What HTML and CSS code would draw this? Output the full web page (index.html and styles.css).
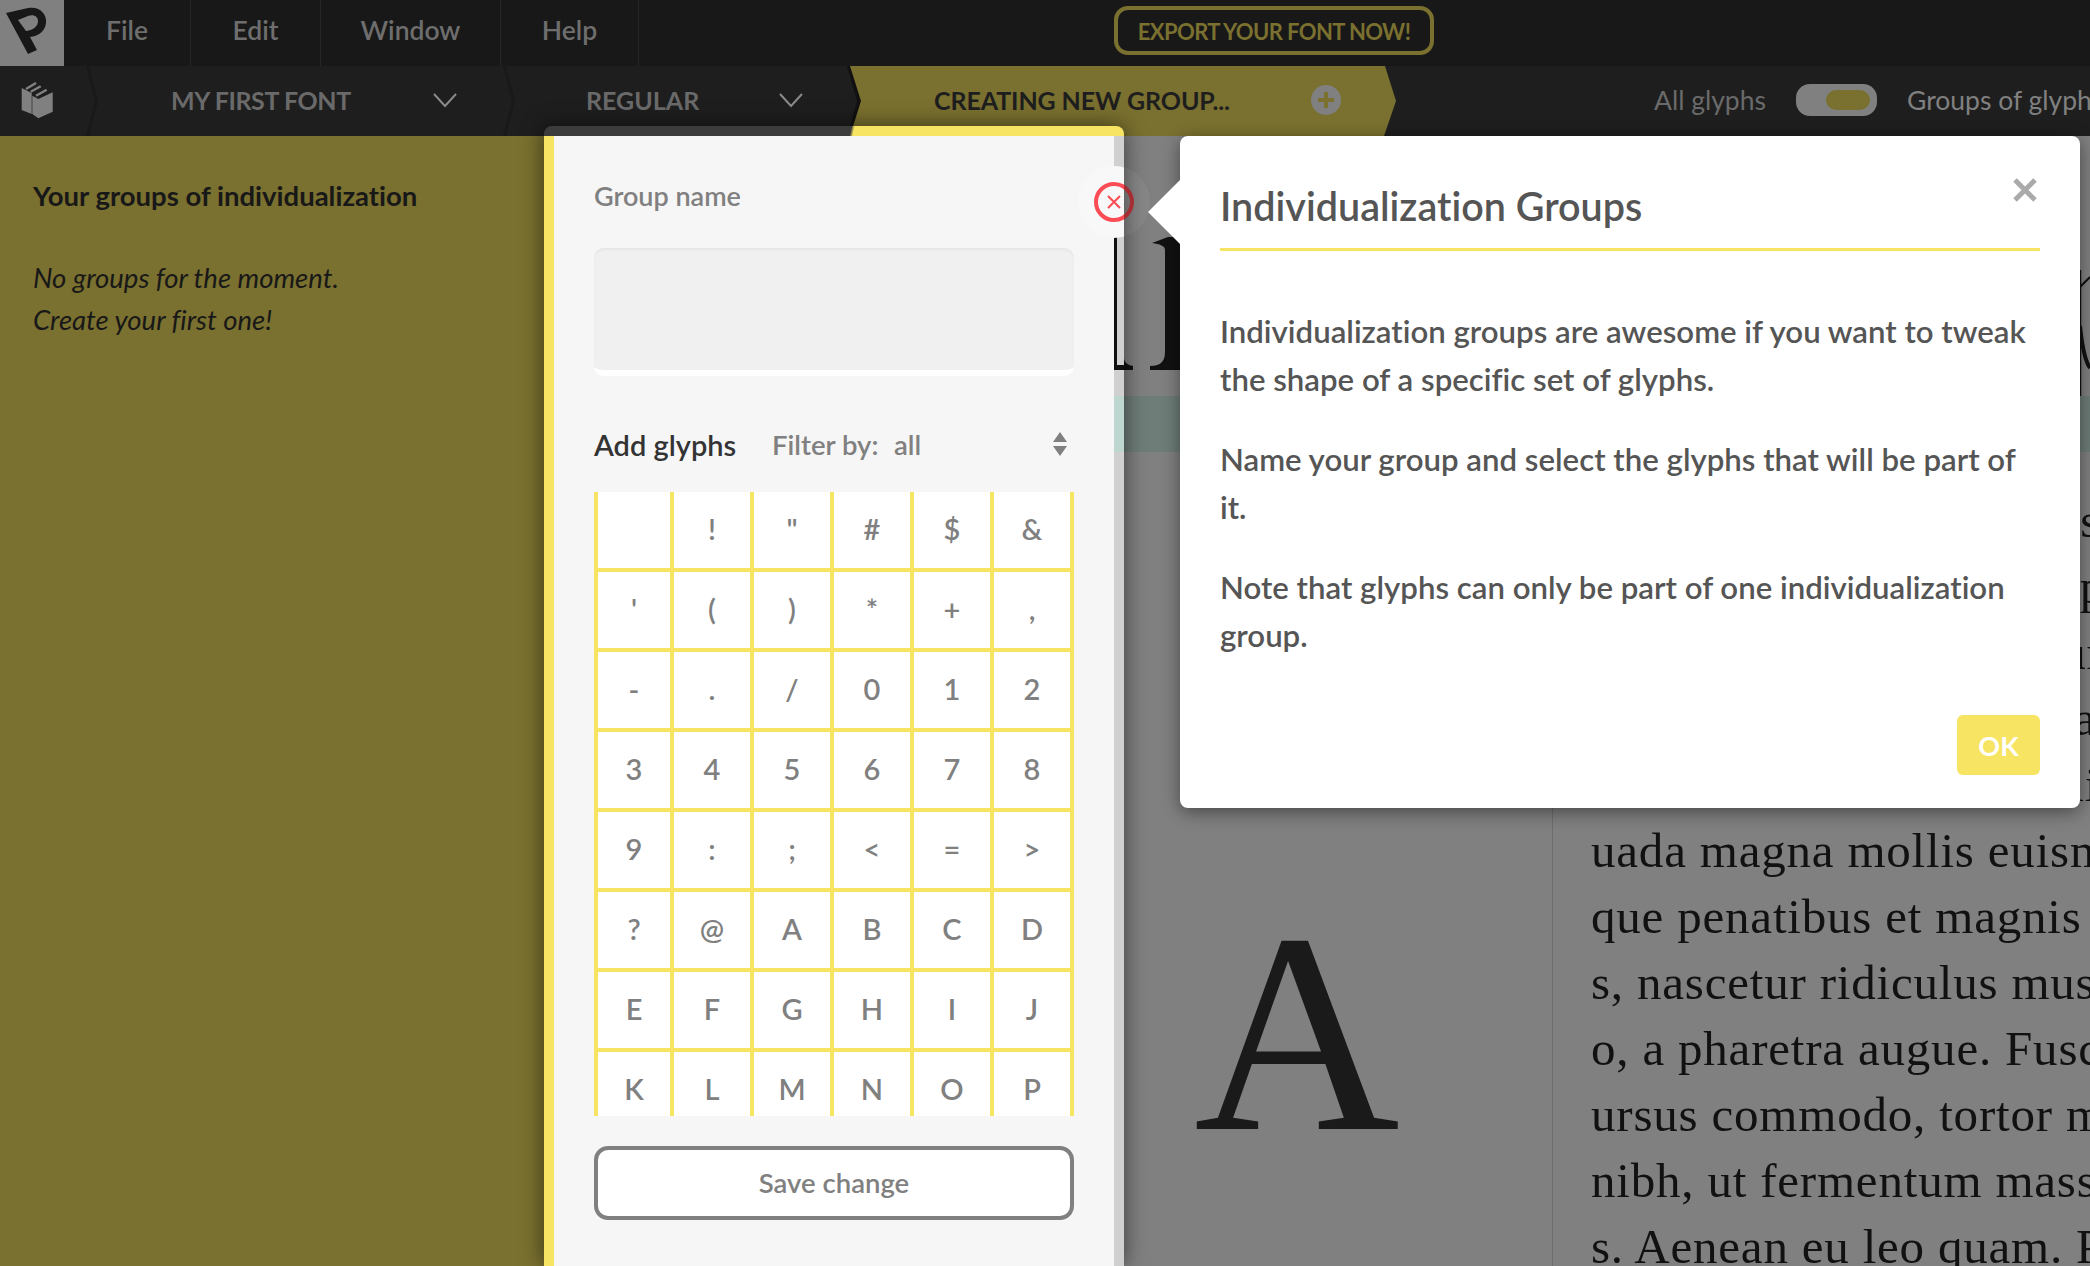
FILE: index.html
```html
<!DOCTYPE html>
<html lang="en">

<head>
  <meta charset="UTF-8">
  <title>Individualization Groups</title>
  <link rel="stylesheet" href="styles.css">
</head>

<body>
  <!-- Menu -->
  <div class="topbar">
    <div class="logo">
      <svg width="64" height="66" viewBox="0 0 64 66">
        <path d="M6 13 L28 8 C40 6 47 14 46 23 C45 32 38 36 30 37 L37 50 L28 54 Z M18 20 L26 31 C34 30 38 26 38 21 C38 16 33 14 28 16 Z" fill="#181818" fill-rule="evenodd"/>
      </svg>
    </div>
    <div class="menu-item file">File</div>
    <div class="menu-item edit">Edit</div>
    <div class="menu-item window">Window</div>
    <div class="menu-item help">Help</div>
    <button class="export">EXPORT YOUR FONT NOW!</button>
  </div>

  <!-- Navigation des polices -->
  <div class="navbar">
    <div class="books">
      <svg width="34" height="38" viewBox="0 0 34 38">
        <path d="M1.7 6 L11.7 11 V32 L1.7 28 Z" fill="#808080"/>
        <path d="M12.3 13.7 L18.3 17 L32.7 10.3 V29.7 L18.3 36.3 L12.3 32 Z" fill="#808080"/>
        <path d="M6 7 L16 1 M10.7 9.7 L20.7 4.3 M16 13.7 L26.7 7.7" stroke="#808080" stroke-width="2.4" fill="none"/>
      </svg>
    </div>
    <div class="tab tab-font">
      <span class="tab-label">MY FIRST FONT</span>
      <svg class="chevron" width="26" height="16" viewBox="0 0 26 16"><path d="M2 2 L13 14 L24 2" fill="none" stroke="#8a8a8a" stroke-width="2"/></svg>
    </div>
    <div class="tab tab-style">
      <span class="tab-label">REGULAR</span>
      <svg class="chevron" width="26" height="16" viewBox="0 0 26 16"><path d="M2 2 L13 14 L24 2" fill="none" stroke="#8a8a8a" stroke-width="2"/></svg>
    </div>
    <div class="tab tab-active">
      <span class="tab-label">CREATING NEW GROUP...</span>
      <svg class="plus" width="30" height="30" viewBox="0 0 30 30">
        <circle cx="15" cy="15" r="15" fill="#808080"/>
        <path d="M15 7 V23 M7 15 H23" stroke="#7a702f" stroke-width="4"/>
      </svg>
    </div>
    <div class="view-switch">
      <span class="all-glyphs">All glyphs</span>
      <div class="toggle"><div class="knob"></div></div>
      <span class="groups-glyphs">Groups of glyphs</span>
    </div>
  </div>

  <div class="main">
    <!-- Liste des groupes -->
    <div class="groups">
      <h2>Your groups of individualization</h2>
      <p>No groups for the moment.</p>
      <p>Create your first one!</p>
    </div>

    <!-- Panneau de creation -->
    <div class="glyph-panel">
      <div class="panel-top"></div>
      <div class="panel-body">
        <div class="panel-content">
          <div class="field-label">Group name</div>
          <div class="name-input"></div>
          <div class="add-row">
            <span class="add-title">Add glyphs</span>
            <span class="filter-label">Filter by:</span>
            <span class="filter-value">all</span>
            <svg class="updown" width="14" height="24" viewBox="0 0 14 24">
              <path d="M7 0 L14 10 H0 Z M7 24 L14 14 H0 Z" fill="#808080"/>
            </svg>
          </div>
          <div class="glyph-grid" id="glyph-grid"></div>
          <button class="save">Save change</button>
        </div>
        <div class="panel-edge"></div>
      </div>
    </div>

    <!-- Apercu derriere le voile -->
    <div class="preview">
      <div class="preview-head">
        <svg width="56" height="260" viewBox="0 0 56 260">
          <path d="M28 107 L44 101 H56 V234 H26 V230 C36 230 41 226 41 216 V114 C41 110 36 108 28 107 Z" fill="#111"/>
          <path d="M0 234 H9 V230 C3 229 0 226 0 222 Z" fill="#111"/>
        </svg>
        <svg width="10" height="260" viewBox="0 0 10 260">
          <path d="M0.5 134 V260" stroke="#111" stroke-width="1.5"/>
          <path d="M0 151 L10 141" stroke="#111" stroke-width="2"/>
          <path d="M0 190 C2 210 5 225 10 232" fill="none" stroke="#111" stroke-width="4"/>
        </svg>
      </div>
      <div class="preview-band"></div>
      <div class="preview-cols">
        <div class="big-letter">A</div>
        <div class="sample">
          <div>Curabitur blandit tempus porttitor. Integer posu</div>
          <div>Cras mattis consectetur purus sit amet ferm</div>
          <div>Nullam quis risus eget urna mollis ornare vel</div>
          <div>Donec ullamcorper nulla non metus auctor fri</div>
          <div>Maecenas faucibus mollis interdum. Donec se</div>
          <div>uada magna mollis euismod. Cum sociis natoque</div>
          <div>que penatibus et magnis dis parturient montes</div>
          <div>s, nascetur ridiculus mus. Donec id elit non mi</div>
          <div>o, a pharetra augue. Fusce dapibus, tellus ac</div>
          <div>ursus commodo, tortor mauris condimentum</div>
          <div>nibh, ut fermentum massa justo sit amet risus</div>
          <div>s. Aenean eu leo quam. Pellentesque ornare</div>
        </div>
      </div>
    </div>

    <!-- Bouton d'aide sur le bord du panneau -->
    <svg class="help-dot" width="72" height="72" viewBox="0 0 72 72">
      <defs>
        <clipPath id="in-panel"><rect x="0" y="0" width="46" height="72"/></clipPath>
        <clipPath id="in-veil"><rect x="46" y="0" width="26" height="72"/></clipPath>
      </defs>
      <g clip-path="url(#in-panel)">
        <circle cx="36" cy="36" r="36" fill="#f8f8f8"/>
        <circle cx="36" cy="36" r="18" fill="none" stroke="#fb4b55" stroke-width="4"/>
      </g>
      <g clip-path="url(#in-veil)">
        <circle cx="36" cy="36" r="36" fill="#fff" fill-opacity="0.05"/>
        <circle cx="36" cy="36" r="18" fill="none" stroke="#a52e35" stroke-width="4"/>
      </g>
      <path d="M30 30 L42 42 M42 30 L30 42" stroke="#fb4b55" stroke-width="2"/>
    </svg>

    <!-- Fenetre d'explication -->
    <div class="modal">
      <svg class="modal-close" width="26" height="26" viewBox="0 0 26 26">
        <path d="M3 3 L23 23 M23 3 L3 23" stroke="#aaa" stroke-width="5"/>
      </svg>
      <h1>Individualization Groups</h1>
      <div class="modal-text">
        <p>Individualization groups are awesome if you want to tweak the shape of a specific set of glyphs.</p>
        <p>Name your group and select the glyphs that will be part of it.</p>
        <p>Note that glyphs can only be part of one individualization group.</p>
      </div>
      <div class="modal-footer">
        <button class="ok">OK</button>
      </div>
    </div>
  </div>

  <script>
    const glyphs = [' ', '!', '"', '#', '$', '&', "'", '(', ')', '*', '+', ',', '-', '.', '/',
      '0', '1', '2', '3', '4', '5', '6', '7', '8', '9', ':', ';', '<', '=', '>', '?', '@',
      'A', 'B', 'C', 'D', 'E', 'F', 'G', 'H', 'I', 'J', 'K', 'L', 'M', 'N', 'O', 'P'];
    const grid = document.getElementById('glyph-grid');

    glyphs.forEach((glyph) => {
      const cell = document.createElement('div');
      cell.className = 'glyph-cell';
      cell.textContent = glyph;
      grid.appendChild(cell);
    });
  </script>
</body>

</html>
```

FILE: styles.css
```css
* {
  box-sizing: border-box;
}

html,
body {
  height: 100%;
}

body {
  margin: 0;
  overflow: hidden;
  font-family: "Lato", "Noto Sans", sans-serif;
  font-variant-ligatures: none;
  background: #808080;
}

button {
  font-family: inherit;
  font-variant-ligatures: none;
  cursor: pointer;
}

/* Menu */
.topbar {
  display: flex;
  align-items: stretch;
  height: 66px;
  background: #181818;
}

.logo {
  flex: none;
  width: 64px;
  background: #808080;
}

.logo svg {
  display: block;
}

.menu-item {
  flex: none;
  display: flex;
  align-items: center;
  justify-content: center;
  padding-bottom: 6px;
  border-right: 1px solid #262626;
  color: #6e6e6e;
  font-size: 26.5px;
  font-weight: 600;
}

.menu-item.file { width: 127px; }
.menu-item.edit { width: 130px; }
.menu-item.window { width: 180px; }
.menu-item.help { width: 138px; }

.export {
  flex: none;
  align-self: flex-start;
  width: 320px;
  height: 49px;
  margin: 6px 0 0 475px;
  padding: 2px 0 0;
  background: none;
  border: 4px solid #7a702f;
  border-radius: 14px;
  color: #7a702f;
  font-size: 22px;
  font-weight: 700;
  letter-spacing: -0.6px;
}

/* Onglets */
.navbar {
  display: flex;
  align-items: stretch;
  height: 70px;
  background: #1e1e1e;
  overflow: hidden;
}

.books {
  flex: none;
  display: flex;
  align-items: center;
  width: 92px;
  padding-left: 20px;
}

.tab {
  flex: none;
  position: relative;
  display: flex;
  align-items: center;
  padding-bottom: 2px;
  color: #6a6a6a;
  font-size: 25px;
  font-weight: 700;
  letter-spacing: -0.4px;
  white-space: nowrap;
}

/* Pointe entre deux onglets */
.tab-font::before,
.tab-style::before,
.tab-style::after {
  content: "";
  position: absolute;
  top: 0;
  bottom: 0;
  width: 12px;
  background: #191919;
  clip-path: polygon(0 0, 3px 0, 100% 50%, 3px 100%, 0 100%, 9px 50%);
}

.tab-font::before {
  left: -6px;
}

.tab-style::before {
  left: -7px;
}

.tab-style::after {
  right: -11px;
  width: 14px;
  background: #111;
  clip-path: polygon(0 0, 4px 0, 100% 50%, 4px 100%, 0 100%, 10px 50%);
}

.tab-font {
  width: 418px;
  padding-left: 79px;
}

.tab-font .chevron {
  margin-left: 81px;
}

.tab-style {
  width: 340px;
  padding-left: 76px;
  letter-spacing: 0;
}

.tab-style .chevron {
  margin-left: 79px;
}

.tab-active {
  z-index: 1;
  width: 546px;
  padding-left: 84px;
  background: #7a702f;
  color: #1e1e1e;
  letter-spacing: -0.1px;
  clip-path: polygon(0 0, 535px 0, 100% 50%, 534px 100%, 0 100%, 11px 50%);
}

.tab-active .plus {
  margin-left: 81px;
}

.view-switch {
  flex: none;
  display: flex;
  align-items: center;
  margin-left: 258px;
  padding-bottom: 2px;
  font-size: 26.5px;
  white-space: nowrap;
}

.all-glyphs {
  color: #6a6a6a;
}

.groups-glyphs {
  color: #808080;
}

.toggle {
  width: 81px;
  height: 32px;
  margin: 0 30px;
  padding: 6px 7px;
  background: #808080;
  border-radius: 14px;
}

.knob {
  width: 44px;
  height: 20px;
  margin-left: auto;
  background: #7a702f;
  border-radius: 10px;
}

/* Zone principale */
.main {
  position: relative;
  display: flex;
  height: 1130px;
}

.groups {
  flex: none;
  width: 544px;
  padding: 38px 33px;
  background: #7a702f;
  color: #181818;
  font-size: 27.5px;
}

.groups h2 {
  margin: 0 0 39px;
  font-size: 27.5px;
  line-height: 44px;
  font-weight: 700;
}

.groups p {
  margin: 0;
  font-style: italic;
  line-height: 42px;
}

.glyph-panel {
  flex: none;
  position: relative;
  z-index: 1;
  display: flex;
  flex-direction: column;
  width: 580px;
  height: 1140px;
  margin-top: -10px;
  border-radius: 8px 8px 0 0;
  box-shadow: 0 0 22px rgba(0, 0, 0, 0.55);
}

.panel-top {
  flex: 0 0 10px;
  border-radius: 8px 8px 0 0;
  background: linear-gradient(102deg, #3c3c3c 301px, #f7e463 304px);
}

.panel-body {
  flex: 1;
  display: flex;
  border-left: 10px solid #f7e463;
  background: #f6f6f6;
}

.panel-content {
  flex: 1;
  padding: 39px 40px 0;
}

.panel-edge {
  flex: 0 0 10px;
  background:
    linear-gradient(90deg, #111 3px, transparent 3px) 0 101px / 100% 133px no-repeat,
    linear-gradient(#111, #111) 0 229px / 100% 5px no-repeat,
    linear-gradient(#bdd6cf, #bdd6cf) 0 260px / 100% 56px no-repeat,
    #d0d0d0;
}

.field-label {
  color: #808080;
  font-size: 27px;
  font-weight: 600;
  line-height: 42px;
}

.name-input {
  height: 128px;
  margin-top: 31px;
  background: #f0f0f0;
  border-radius: 10px;
  border-bottom: 6px solid #fff;
  box-shadow: inset 0 2px 2px #e6e6e6;
}

.add-row {
  display: flex;
  align-items: center;
  height: 48px;
  margin-top: 44px;
  color: #808080;
  font-size: 27.5px;
  font-weight: 600;
}

.add-title {
  width: 178px;
  color: #333;
  font-size: 29px;
  font-weight: 600;
}

.filter-label {
  width: 122px;
}

.updown {
  margin-left: auto;
  margin-right: 7px;
}

.glyph-grid {
  display: grid;
  grid-template-columns: 76px repeat(5, 80px);
  grid-auto-rows: 80px;
  height: 624px;
  margin-top: 24px;
  border-left: 4px solid #f7e463;
  overflow: hidden;
}

.glyph-cell {
  display: flex;
  align-items: center;
  justify-content: center;
  padding-bottom: 4px;
  background: #fff;
  border-right: 4px solid #f7e463;
  border-bottom: 4px solid #f7e463;
  color: #808080;
  font-size: 29px;
  font-weight: 600;
}

.save {
  display: block;
  width: 100%;
  height: 74px;
  margin-top: 30px;
  padding: 0 0 2px;
  background: #fff;
  border: 4px solid #808080;
  border-radius: 14px;
  color: #808080;
  font-size: 27.5px;
  font-weight: 600;
}

/* Apercu */
.preview {
  flex: 1;
  min-width: 0;
  display: flex;
  flex-direction: column;
  background: #808080;
  overflow: hidden;
}

.preview-head {
  flex: 0 0 260px;
  display: flex;
  justify-content: space-between;
}

.preview-band {
  flex: 0 0 56px;
  background: #6e7d78;
}

.preview-cols {
  flex: 1;
  display: flex;
}

.big-letter {
  flex: 0 0 429px;
  padding: 439px 0 0 70px;
  border-right: 1px solid #6e6e6e;
  color: #1a1a1a;
  font-family: "Liberation Serif", serif;
  font-size: 285px;
  line-height: 285px;
}

.sample {
  flex: 1;
  min-width: 0;
  padding: 36px 0 0 38px;
  color: #111;
  font-family: "Liberation Serif", serif;
  font-size: 49px;
  line-height: 66px;
  letter-spacing: 0.8px;
  white-space: nowrap;
}

.help-dot {
  position: absolute;
  left: 1078px;
  top: 30px;
  z-index: 2;
}

/* Fenetre d'explication */
.modal {
  position: absolute;
  left: 1180px;
  top: 0;
  z-index: 3;
  width: 900px;
  height: 672px;
  padding: 45px 40px 0;
  background: #fff;
  border-radius: 8px;
  box-shadow: 0 4px 18px rgba(0, 0, 0, 0.45);
  color: #555;
}

.modal::before {
  content: "";
  position: absolute;
  left: -32px;
  top: 44px;
  width: 32px;
  height: 64px;
  background: #fff;
  clip-path: polygon(100% 0, 0 50%, 100% 100%);
}

.modal-close {
  position: absolute;
  right: 42px;
  top: 41px;
}

.modal h1 {
  margin: 0;
  padding-bottom: 17px;
  border-bottom: 3px solid #f7e463;
  font-size: 39.5px;
  font-weight: 600;
  line-height: 50px;
}

.modal-text {
  padding-top: 56px;
  font-size: 31.2px;
  font-weight: 600;
  line-height: 48px;
}

.modal-text p {
  margin: 0 0 32px;
}

.modal-footer {
  display: flex;
  justify-content: flex-end;
  margin-top: 56px;
}

.ok {
  width: 83px;
  height: 60px;
  padding: 0;
  background: #f7e463;
  border: none;
  border-radius: 6px;
  color: #fff;
  font-size: 27px;
  font-weight: 700;
}
```
